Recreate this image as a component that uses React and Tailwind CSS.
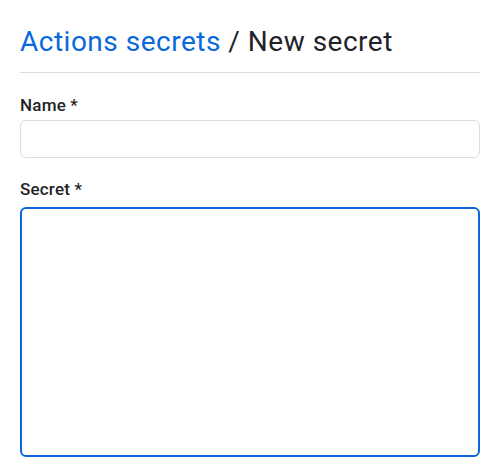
export default function App() {
  return (
    <div className="w-[500px] h-[468px] bg-white px-5" style={{ fontFamily: 'Roboto, "Liberation Sans", sans-serif' }}>
      <div className="pt-6 pb-[13px] border-b border-[#d8dee4]">
        <h1 className="text-[28px] leading-[35px] font-normal tracking-[0.5px] text-[#1f2328]">
          <a className="text-[#0969da]">Actions secrets</a> / New secret
        </h1>
      </div>
      <div className="mt-[22px]">
        <label className="block text-[17px] leading-5 font-medium tracking-[0.2px] text-[#1f2328] mb-[5px]">Name *</label>
        <input type="text" className="block w-full h-[38px] rounded-[6px] border border-[#d8dee4] bg-white px-3 outline-none" />
      </div>
      <div className="mt-[21px]">
        <label className="block text-[17px] leading-5 font-medium tracking-[0.2px] text-[#1f2328] mb-2">Secret *</label>
        <textarea className="block w-full h-[250px] rounded-[6px] border-2 border-[#0969da] bg-white px-3 py-2 outline-none resize-none" />
      </div>
    </div>
  );
}
